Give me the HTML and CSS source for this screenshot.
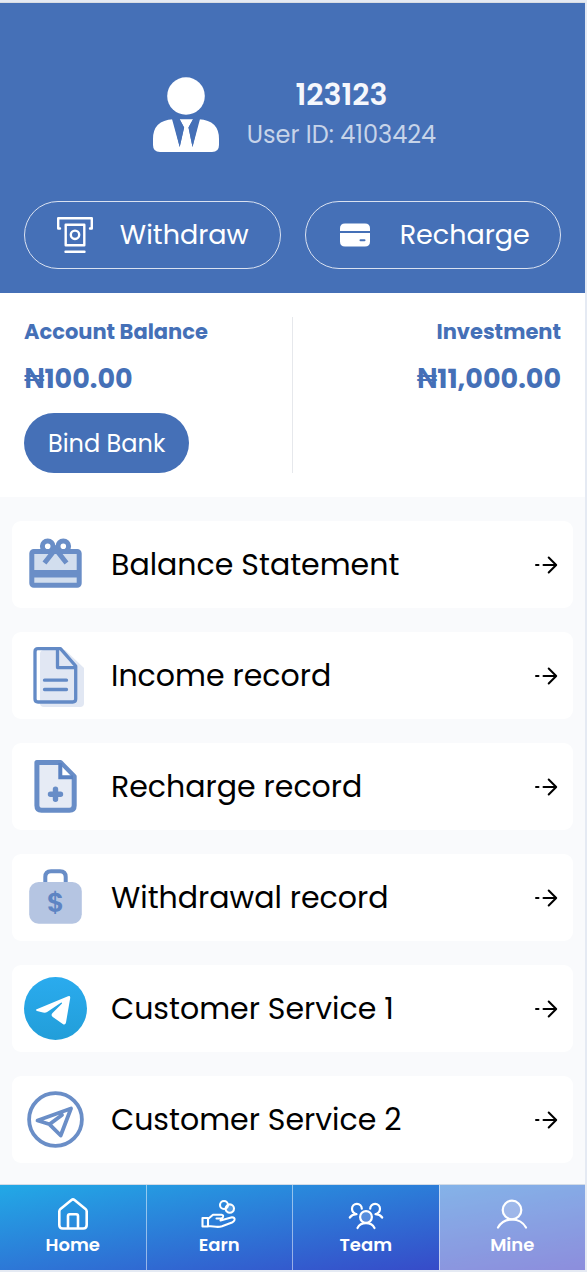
FILE: index.html
```html
<!DOCTYPE html>
<html lang="en">
<head>
<meta charset="utf-8">
<meta name="viewport" content="width=device-width, initial-scale=1">
<title>Mine</title>
<link rel="stylesheet" href="styles.css">
</head>
<body>
<div class="app">
  <header class="hero">
    <div class="profile">
      <svg class="avatar" viewBox="-4 0 70 77" aria-hidden="true">
        <circle cx="33" cy="19" r="18.8" fill="#fff"/>
        <path d="M0 66V62Q0 43.500 20 42.300L26.700 70L31 50.500L26.700 42.300H40L35.500 50.500L39.500 70L46 42.300Q66 43.500 66 62V68Q66 75 59 75H7Q0 75 0 68Z" fill="#fff"/>
        <path d="M19 42L26.700 70L31.200 50.500L26.500 42ZM40.200 42L35.500 50.500L39.500 70L47 42Z" fill="#4570b7"/>
      </svg>
      <div class="identity">
        <h1 class="name">123123</h1>
        <p class="user-id">User ID: 4103424</p>
      </div>
    </div>
    <div class="actions">
      <button class="pill" type="button">
        <svg class="pill-icon" viewBox="0 0 38 38" fill="none" stroke="#fff" stroke-width="2.4" stroke-linecap="round" stroke-linejoin="round" aria-hidden="true">
          <path d="M4 12.500H2.200V2.200H35.800V12.500H34M9.700 8.800H28.300V29.300H9.700ZM9.500 35.700H28.500"/>
          <circle cx="19" cy="18.800" r="4.200"/>
        </svg>
        Withdraw
      </button>
      <button class="pill" type="button">
        <svg class="pill-icon" viewBox="0 0 38 38" fill="#fff" aria-hidden="true">
          <path d="M4 15V12.500Q4 7.500 9 7.500H29Q34 7.500 34 12.500V15Z"/>
          <path fill-rule="evenodd" d="M4 17H34V25.500Q34 30.500 29 30.500H9Q4 30.500 4 25.500ZM24.500 23.200A1 1 0 0 0 24.500 25.200H28.500A1 1 0 0 0 28.500 23.200Z"/>
        </svg>
        Recharge
      </button>
    </div>
  </header>

  <section class="balances">
    <div class="balance">
      <h2 class="balance-label">Account Balance</h2>
      <p class="amount">₦100.00</p>
      <button class="bind" type="button">Bind Bank</button>
    </div>
    <div class="balance balance-end">
      <h2 class="balance-label">Investment</h2>
      <p class="amount">₦11,000.00</p>
    </div>
  </section>

  <main class="menu">
    <a class="card" href="#balance">
      <svg class="card-icon" viewBox="0 0 63 63" fill="none" stroke="#6a8ec7" stroke-width="5" aria-hidden="true">
        <rect x="7.800" y="18.500" width="47.400" height="33.700" rx="2" fill="#d2deee" stroke-linejoin="round"/>
        <path d="M8 40.700H55" stroke-width="7.400"/>
        <circle cx="23.700" cy="13.200" r="5.300" fill="#fff"/>
        <circle cx="39.300" cy="13.200" r="5.300" fill="#fff"/>
        <path d="M20.500 30L31.500 16L42.500 30"/>
        <path d="M28 18L31.500 14L35 18Z" fill="#6a8ec7" stroke-width="2"/>
      </svg>
      <span class="card-label">Balance Statement</span>
      <svg class="arrow" viewBox="0 0 28 28" aria-hidden="true"><path d="M3 14H5.500M10.500 14H22.500M15.700 6.500L23.200 14L15.700 21.500"/></svg>
    </a>
    <a class="card" href="#income">
      <svg class="card-icon" viewBox="0 0 63 63" fill="none" stroke="#638ac6" stroke-width="3.300" stroke-linecap="round" stroke-linejoin="round" aria-hidden="true">
        <path d="M20 6H41L60 24V59Q60 63 56 63H20Q16 63 16 59V10Q16 6 20 6Z" fill="#e1e7f3" stroke="none"/>
        <path d="M14 4.700H36.500L51.700 22V55Q51.700 58 48.700 58H14Q11 58 11 55V7.700Q11 4.700 14 4.700Z"/>
        <path d="M33.500 5V23.600H51.500M20.500 36.200H42.500M20.500 45.500H42.500"/>
      </svg>
      <span class="card-label">Income record</span>
      <svg class="arrow" viewBox="0 0 28 28" aria-hidden="true"><path d="M3 14H5.500M10.500 14H22.500M15.700 6.500L23.200 14L15.700 21.500"/></svg>
    </a>
    <a class="card" href="#recharge">
      <svg class="card-icon" viewBox="0 0 63 63" fill="none" stroke="#688dc7" stroke-width="5" stroke-linejoin="round" aria-hidden="true">
        <path d="M12.900 7.600H36.500L50.200 21.500V50.500Q50.200 55.200 45.500 55.200H17.500Q12.900 55.200 12.900 50.500Z" fill="#e6ebf5"/>
        <path d="M36.800 10.500L47.500 21.500H36.800Z" fill="#fff" stroke="none"/>
        <path d="M36.300 8V22.300H49" stroke="#5a82c2" stroke-width="4" stroke-linejoin="miter"/>
        <path d="M31.500 34.300V44.300M26.500 39.300H36.500" stroke-width="5.400" stroke-linecap="round"/>
      </svg>
      <span class="card-label">Recharge record</span>
      <svg class="arrow" viewBox="0 0 28 28" aria-hidden="true"><path d="M3 14H5.500M10.500 14H22.500M15.700 6.500L23.200 14L15.700 21.500"/></svg>
    </a>
    <a class="card" href="#withdrawals">
      <svg class="card-icon" viewBox="0 0 63 63" aria-hidden="true">
        <path d="M21.300 16V11Q21.300 5.200 27 5.200H36Q41.700 5.200 41.700 11V16" fill="none" stroke="#688dc7" stroke-width="4"/>
        <rect x="5.200" y="16" width="52.600" height="41.700" rx="9.500" fill="#b5c5e2"/>
        <text class="coin-sign" x="31.500" y="46" text-anchor="middle">$</text>
      </svg>
      <span class="card-label">Withdrawal record</span>
      <svg class="arrow" viewBox="0 0 28 28" aria-hidden="true"><path d="M3 14H5.500M10.500 14H22.500M15.700 6.500L23.200 14L15.700 21.500"/></svg>
    </a>
    <a class="card" href="#service-1">
      <svg class="card-icon" viewBox="0 0 63 63" aria-hidden="true">
        <defs><linearGradient id="sky" x1="0" y1="0" x2="0" y2="1"><stop offset="0" stop-color="#2aabee"/><stop offset="1" stop-color="#229ed9"/></linearGradient></defs>
        <circle cx="31.500" cy="31.500" r="31.500" fill="url(#sky)"/>
        <path d="M12.700 32.200L44 19.200Q46.500 18.300 46.200 21L42 45.500Q41.300 48.500 38.800 47L28.800 40Q26.500 38.200 28.500 36L38 26.500Q38.300 25 36.500 26L23.500 34.800Q21.500 36 19 35.500L13 34Q11.200 33 12.700 32.200Z" fill="#fff"/>
      </svg>
      <span class="card-label">Customer Service 1</span>
      <svg class="arrow" viewBox="0 0 28 28" aria-hidden="true"><path d="M3 14H5.500M10.500 14H22.500M15.700 6.500L23.200 14L15.700 21.500"/></svg>
    </a>
    <a class="card" href="#service-2">
      <svg class="card-icon" viewBox="0 0 63 63" fill="none" stroke="#6a8ec7" stroke-width="3.800" stroke-linejoin="round" stroke-linecap="round" aria-hidden="true">
        <circle cx="31.500" cy="31.500" r="26.400"/>
        <path d="M13.500 32.500L47 20.500L36.700 47.500L25.500 36.300Z M25.500 36.300L38 27"/>
      </svg>
      <span class="card-label">Customer Service 2</span>
      <svg class="arrow" viewBox="0 0 28 28" aria-hidden="true"><path d="M3 14H5.500M10.500 14H22.500M15.700 6.500L23.200 14L15.700 21.500"/></svg>
    </a>
  </main>

  <nav class="tabs">
    <a class="tab" href="#home">
      <svg class="tab-icon" viewBox="0 0 36 36" stroke-width="2.600" aria-hidden="true"><path d="M4.300 15.500Q4.300 14 5.500 12.900L16.500 4Q18 2.800 19.500 4L30.500 12.900Q31.700 14 31.700 15.500V29Q31.700 32.500 28.200 32.500H7.800Q4.300 32.500 4.300 29ZM13 32V20Q13 18.300 14.700 18.300H21.300Q23 18.300 23 20V32"/></svg>
      Home
    </a>
    <a class="tab" href="#earn">
      <svg class="tab-icon" viewBox="0 0 36 36" stroke-width="2.100" aria-hidden="true"><path d="M1.500 22H7V30.500H1.500ZM7 23L12 18.700H20.500Q22.500 19 22 21Q21.500 22.500 19.500 22.500H15.500M19.500 24.500L31 21.300Q34 21.500 33.500 24Q33 25.500 31 26.500L21 30.200Q18 31.200 15 30.800L7 30"/><circle cx="23" cy="9" r="4"/><circle cx="28.800" cy="12.600" r="4.200" fill="#ffffff33"/></svg>
      Earn
    </a>
    <a class="tab" href="#team">
      <svg class="tab-icon" viewBox="0 0 36 36" stroke-width="2.200" aria-hidden="true"><circle cx="18" cy="21" r="5.900" fill="#ffffff33"/><path d="M9.500 32Q12 27.200 18 27.200T26.500 32M1.800 21.500Q4 18.400 8.500 18.200Q4 16.500 4 12.700A4.900 4.900 0 0 1 13.800 12.700M34.200 21.500Q32 18.400 27.500 18.200Q32 16.500 32 12.700A4.900 4.900 0 0 0 22.200 12.700"/></svg>
      Team
    </a>
    <a class="tab tab-active" href="#mine" aria-current="page">
      <svg class="tab-icon" viewBox="0 0 36 36" stroke-width="2.200" aria-hidden="true"><circle cx="18" cy="14" r="9.300" fill="#ffffff33"/><path d="M4 31.500Q8.500 23.500 18 23.500T32 31.500"/></svg>
      Mine
    </a>
  </nav>
</div>
</body>
</html>
```
FILE: styles.css
```css
* {
  box-sizing: border-box;
}

body {
  margin: 0;
  padding: 2px 2px 2px 0;
  min-height: 100vh;
  display: flex;
  background: #e5eaf3;
  font-family: Poppins, Inter, "Open Sans", sans-serif;
}

h1,
h2,
p {
  margin: 0;
}

button {
  font: inherit;
  cursor: pointer;
}

a {
  color: inherit;
  text-decoration: none;
}

.app {
  flex: 1;
  min-width: 0;
  display: flex;
  flex-direction: column;
  border-top: 1px solid #d9dde3;
  background: #f9fafc;
}

.hero {
  padding: 72px 24px 24px;
  background: #4570b7;
  color: #fff;
}

.profile {
  display: flex;
  justify-content: center;
  align-items: center;
  gap: 28px;
  height: 80px;
}

.avatar {
  width: 70px;
  height: 77px;
}

.identity {
  text-align: center;
}

.name {
  font-size: 30px;
  line-height: 40px;
  font-weight: 600;
  color: #f5f7fc;
}

.user-id {
  font-size: 24px;
  line-height: 40px;
  color: #c7d4e9;
}

.actions {
  display: flex;
  gap: 24px;
  margin-top: 46px;
}

.pill {
  flex: 1;
  display: flex;
  justify-content: center;
  align-items: center;
  gap: 26px;
  height: 68px;
  padding: 0;
  border: 1px solid #dae2f1;
  border-radius: 34px;
  background: none;
  color: #fff;
  font-size: 27px;
}

.pill-icon {
  width: 38px;
  height: 38px;
}

.balances {
  display: flex;
  padding: 24px;
  background: #fff;
  color: #4570b7;
}

.balance {
  flex: 1;
}

.balance-end {
  border-left: 1px solid #e6e8ec;
  text-align: right;
}

.balance-label {
  font-size: 21px;
  line-height: 30px;
  font-weight: 700;
}

.amount {
  margin-top: 12px;
  font-size: 27px;
  line-height: 40px;
  font-weight: 700;
}

.bind {
  height: 60px;
  margin-top: 14px;
  padding: 0 24px;
  border: 0;
  border-radius: 30px;
  background: #4570b7;
  color: #fff;
  font-size: 24px;
}

.menu {
  flex: 1;
  display: flex;
  flex-direction: column;
  gap: 24px;
  padding: 24px 12px 21px;
}

.card {
  display: flex;
  align-items: center;
  gap: 24px;
  padding: 12px;
  border-radius: 9px;
  background: #fff;
  color: #000;
}

.card-icon {
  flex: none;
  width: 63px;
  height: 63px;
}

.card-label {
  flex: 1;
  font-size: 30px;
  line-height: 40px;
  white-space: nowrap;
}

.coin-sign {
  font-size: 27px;
  font-weight: 600;
  fill: #5d84c3;
}

.arrow {
  flex: none;
  width: 28px;
  height: 28px;
  fill: none;
  stroke: #000;
  stroke-width: 2;
  stroke-linecap: round;
  stroke-linejoin: round;
}

.tabs {
  display: flex;
  border-top: 1px solid #d3dbe6;
  background: linear-gradient(170deg, #22a9e6, #3a3cc4);
  color: #fff;
}

.tab {
  flex: 1;
  display: flex;
  flex-direction: column;
  align-items: center;
  height: 85px;
  padding-top: 11px;
  font-size: 18px;
  line-height: 26px;
  font-weight: 600;
}

.tab + .tab {
  border-left: 1px solid #ffffff80;
}

.tab-active {
  background: #ffffff6b;
}

.tab-icon {
  width: 36px;
  height: 36px;
  fill: none;
  stroke: #fff;
  stroke-linecap: round;
  stroke-linejoin: round;
}
```
